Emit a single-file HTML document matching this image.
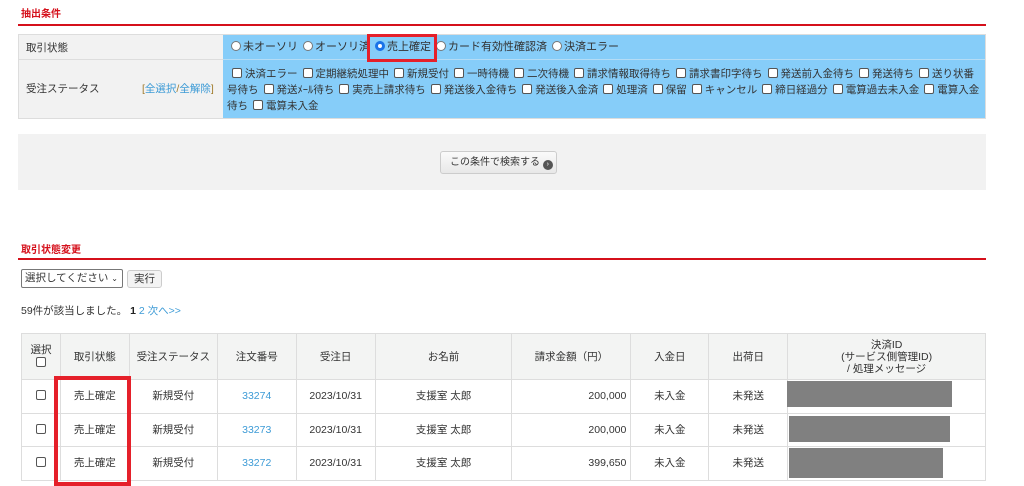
<!DOCTYPE html>
<html><head><meta charset="utf-8"><style>
*{margin:0;padding:0;box-sizing:border-box}
body{width:1024px;height:482px;overflow:hidden;background:#fff;font-family:"Liberation Sans","Noto Sans CJK JP",sans-serif;font-size:10.5px;color:#333;position:relative}
.a{position:absolute;white-space:nowrap}
.t{color:#d5101b;font-weight:bold;font-size:10px}
.rl{position:absolute;left:18px;width:968px;height:2px;background:#d5101b}
.rb{display:inline-block;width:10px;height:10px;border:1px solid #777;border-radius:50%;background:#fff;vertical-align:-1px;margin:0 2px 0 5px}
.cb{display:inline-block;width:10px;height:10px;border:1px solid #555;border-radius:2px;background:#fff;vertical-align:-1px;margin:0 3px 0 5px}
table{position:absolute;left:21px;top:333px;border-collapse:collapse;width:965px}
td,th{border:1px solid #ddd;text-align:center;font-weight:normal;font-size:10.5px;color:#333;vertical-align:middle}
th{background:#f3f4f3;height:46px}
td{height:33.5px;line-height:14px}
td .cb,th .cb{margin:0}
.lnk{color:#3d9bd6}
.g{position:absolute;background:#808080}
</style></head><body>
<div class="a t" style="left:21px;top:5px">抽出条件</div>
<div class="rl" style="top:24px"></div>
<div class="a" style="left:18px;top:34px;width:968px;height:85px;border:1px solid #ddd;background:#f2f2f2"></div>
<div class="a" style="left:223px;top:35px;width:762px;height:83px;background:#86cdf9"></div>
<div class="a" style="left:18px;top:59px;width:968px;height:1px;background:#ddd"></div>
<div class="a" style="left:223px;top:59px;width:762px;height:1px;background:#b5dcf5"></div>
<div class="a" style="left:26px;top:40px">取引状態</div>
<div class="a" style="left:26px;top:81px">受注ステータス</div>
<div class="a" style="left:142px;top:81px;color:#a07a2a">[<span class="lnk">全選択</span>/<span class="lnk">全解除</span>]</div>
<div class="a" style="left:226px;top:41px;line-height:13px;font-size:11px"><span class="rb"></span>未オーソリ<span class="rb"></span>オーソリ済<span class="rb" style="border:3px solid #1a73e8"></span>売上確定<span class="rb"></span>カード有効性確認済<span class="rb"></span>決済エラー</div>
<div class="a" style="left:367px;top:34px;width:70px;height:28px;border:3px solid #e5202a"></div>
<div class="a" style="left:227px;top:66px;width:756px;white-space:normal;word-break:break-all;line-height:16px;font-size:10.5px"><span class="cb"></span>決済エラー<span class="cb"></span>定期継続処理中<span class="cb"></span>新規受付<span class="cb"></span>一時待機<span class="cb"></span>二次待機<span class="cb"></span>請求情報取得待ち<span class="cb"></span>請求書印字待ち<span class="cb"></span>発送前入金待ち<span class="cb"></span>発送待ち<span class="cb"></span>送り状番号待ち<span class="cb"></span>発送ﾒｰﾙ待ち<span class="cb"></span>実売上請求待ち<span class="cb"></span>発送後入金待ち<span class="cb"></span>発送後入金済<span class="cb"></span>処理済<span class="cb"></span>保留<span class="cb"></span>キャンセル<span class="cb"></span>締日経過分<span class="cb"></span>電算過去未入金<span class="cb"></span>電算入金待ち<span class="cb"></span>電算未入金</div>
<div class="a" style="left:18px;top:134px;width:968px;height:56px;background:#f2f2f2"></div>
<div class="a" style="left:440px;top:151px;width:117px;height:23px;border:1px solid #ccc;border-radius:3px;background:linear-gradient(#fafafa,#e8e8e8);font-size:10px;line-height:21px;padding-left:9px">この条件で検索する <span style="display:inline-block;width:10px;height:10px;border-radius:50%;background:#555;color:#fff;font-size:7px;line-height:10px;text-align:center;vertical-align:-1px">›</span></div>
<div class="a t" style="left:21px;top:241px">取引状態変更</div>
<div class="rl" style="top:258px"></div>
<div class="a" style="left:21px;top:269px;width:102px;height:19px;border:1px solid #777;border-radius:2px;padding-left:3px;line-height:17px">選択してください <span style="font-size:8px">⌄</span></div>
<div class="a" style="left:127px;top:270px;width:35px;height:18px;border:1px solid #ccc;border-radius:3px;background:#f3f3f3;text-align:center;line-height:16px">実行</div>
<div class="a" style="left:21px;top:303px">59件が該当しました。 <b style="color:#222">1</b> <span class="lnk">2 次へ&gt;&gt;</span></div>
<table>
<colgroup><col style="width:39px"><col style="width:69px"><col style="width:88px"><col style="width:79px"><col style="width:79px"><col style="width:137px"><col style="width:119px"><col style="width:78px"><col style="width:79px"><col style="width:198px"></colgroup>
<tr><th style="line-height:13px">選択<br><span class="cb"></span></th><th>取引状態</th><th>受注ステータス</th><th>注文番号</th><th>受注日</th><th>お名前</th><th>請求金額（円）</th><th>入金日</th><th>出荷日</th><th style="line-height:12px">決済ID<br>(サービス側管理ID)<br>/ 処理メッセージ</th></tr>
<tr><td><span class="cb"></span></td><td>売上確定</td><td>新規受付</td><td><span class="lnk">33274</span></td><td>2023/10/31</td><td>支援室 太郎</td><td style="text-align:right;padding-right:4px">200,000</td><td>未入金</td><td>未発送</td><td></td></tr>
<tr><td><span class="cb"></span></td><td>売上確定</td><td>新規受付</td><td><span class="lnk">33273</span></td><td>2023/10/31</td><td>支援室 太郎</td><td style="text-align:right;padding-right:4px">200,000</td><td>未入金</td><td>未発送</td><td></td></tr>
<tr><td><span class="cb"></span></td><td>売上確定</td><td>新規受付</td><td><span class="lnk">33272</span></td><td>2023/10/31</td><td>支援室 太郎</td><td style="text-align:right;padding-right:4px">399,650</td><td>未入金</td><td>未発送</td><td></td></tr>
</table>
<div class="g" style="left:787px;top:381px;width:165px;height:26px"></div>
<div class="g" style="left:789px;top:416px;width:161px;height:26px"></div>
<div class="g" style="left:789px;top:448px;width:154px;height:30px"></div>
<div class="a" style="left:54px;top:376px;width:77px;height:110px;border:4px solid #e5202a"></div>
</body></html>
